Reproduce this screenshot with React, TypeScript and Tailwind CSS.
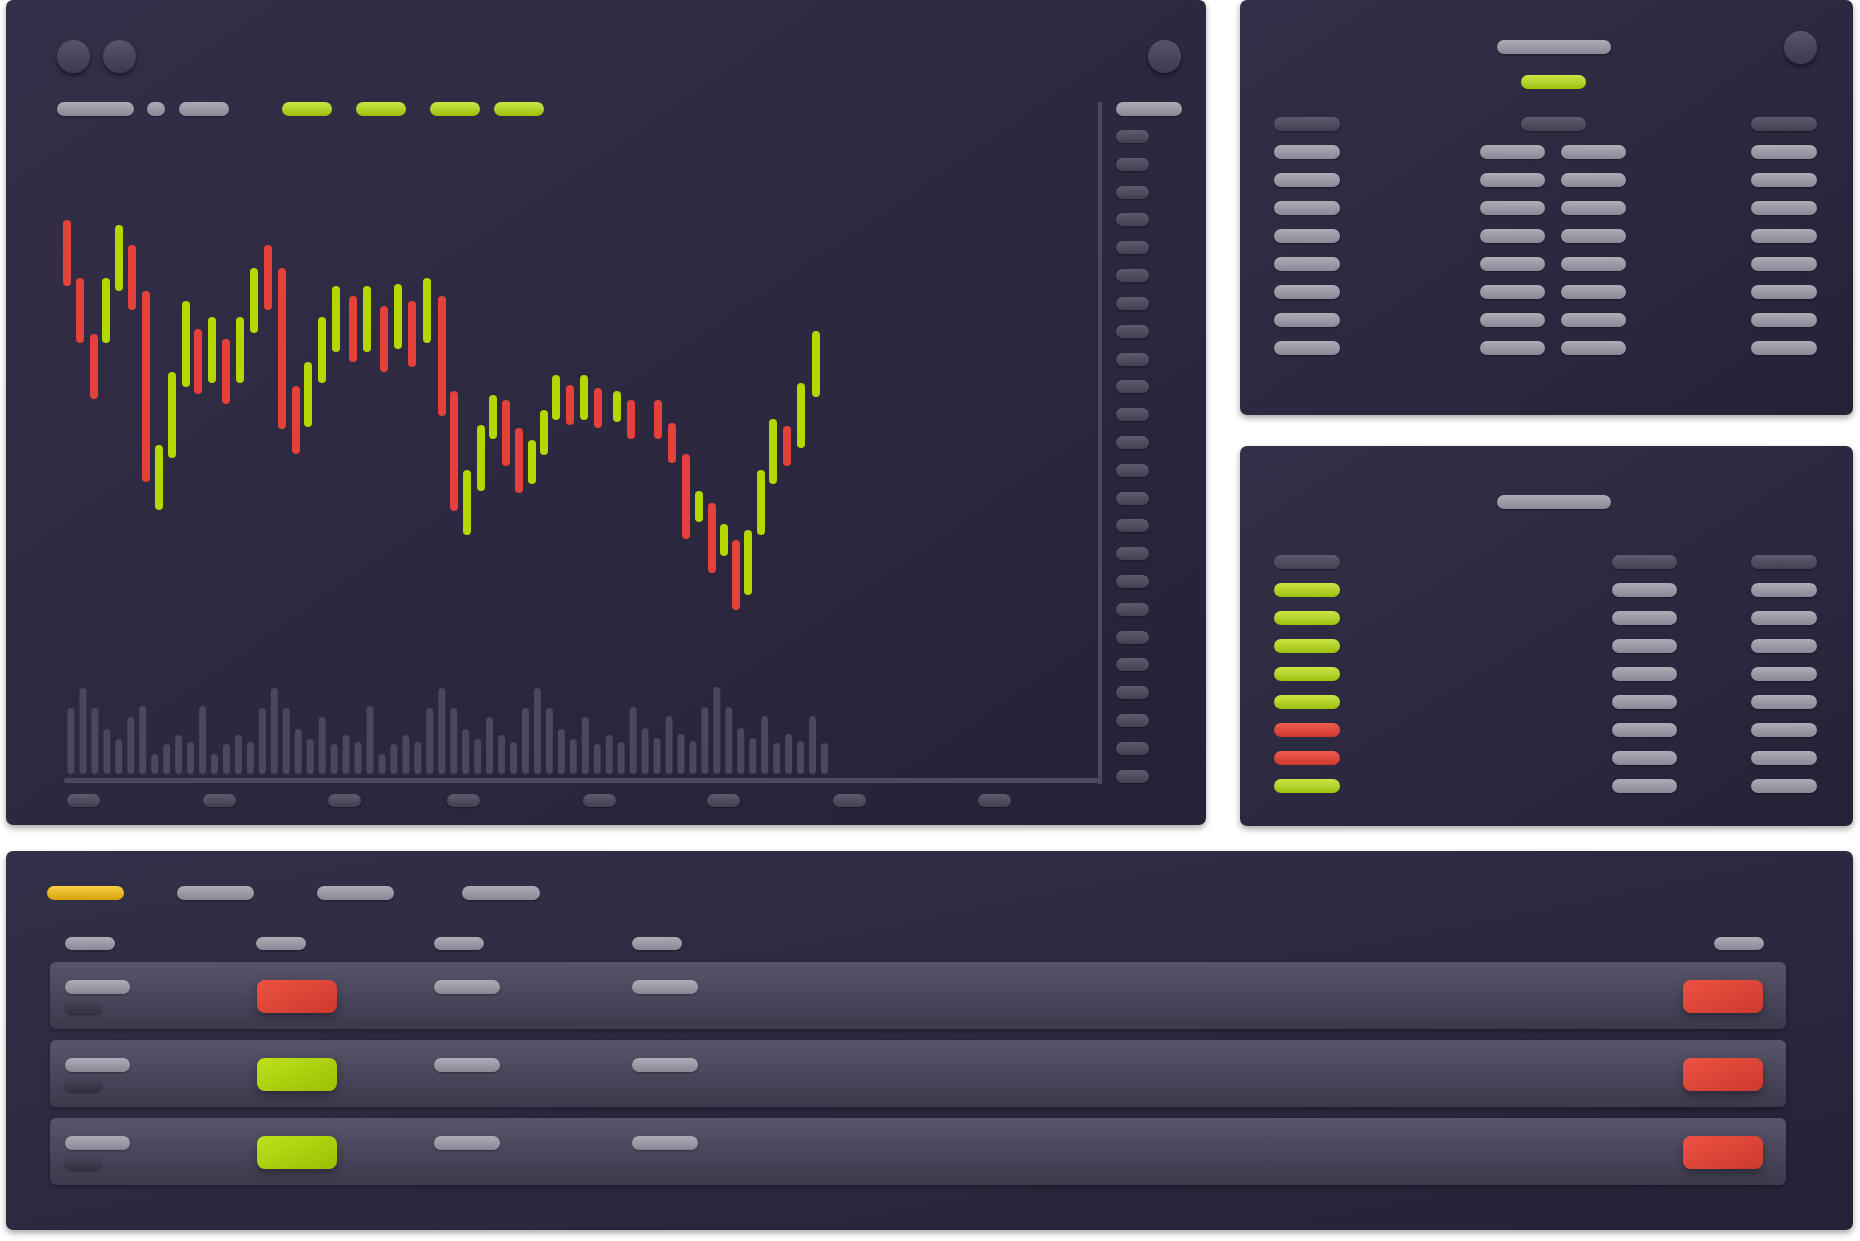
const light = "rounded-full bg-linear-to-b from-[#aeacb6] to-[#8a8895] shadow-[0_1px_2px_rgba(0,0,0,0.35)]";
const dark = "rounded-full bg-linear-to-b from-[#5e5b6e] to-[#434052] shadow-[0_1px_2px_rgba(0,0,0,0.35)]";
const green = "rounded-full bg-linear-to-b from-[#cbe544] to-[#9dc100]";
const red = "rounded-full bg-linear-to-b from-[#ef5b4b] to-[#cc382d]";
const yellow = "rounded-full bg-linear-to-b from-[#f9d040] to-[#d8a200]";
const panel = "rounded-[7px] bg-linear-to-br from-[#322f48] to-[#252238] shadow-[0_3px_6px_rgba(0,0,0,0.35)]";
const circle = "w-[33px] h-[33px] rounded-full bg-linear-to-b from-[#57546b] to-[#3d3a4f] shadow-[0_3px_4px_rgba(0,0,0,0.45)]";

// [centerX, top, bottom, up]
const candles: [number, number, number, boolean][] = [
  [67, 220, 286, false], [80, 278, 343, false], [94, 334, 399, false], [106, 278, 343, true],
  [119, 225, 291, true], [132, 245, 310, false], [146, 291, 482, false], [159, 445, 510, true],
  [172, 372, 458, true], [186, 301, 387, true], [198, 329, 394, false], [212, 317, 383, true],
  [226, 339, 404, false], [240, 317, 383, true], [254, 268, 333, true], [268, 245, 310, false],
  [282, 268, 429, false], [296, 386, 454, false], [308, 362, 427, true], [322, 317, 383, true],
  [336, 286, 352, true], [353, 296, 362, false], [367, 286, 352, true], [384, 306, 372, false],
  [398, 284, 349, true], [412, 301, 367, false], [427, 278, 343, true], [442, 296, 416, false],
  [454, 391, 511, false], [467, 470, 535, true], [481, 425, 491, true], [493, 395, 439, true],
  [506, 400, 466, false], [519, 428, 493, false], [532, 440, 484, true], [544, 410, 455, true],
  [556, 375, 420, true], [570, 385, 425, false], [584, 375, 420, true], [598, 388, 428, false],
  [617, 391, 422, true], [631, 400, 439, false], [658, 400, 439, false], [672, 423, 463, false],
  [686, 454, 539, false], [699, 491, 522, true], [712, 503, 573, false], [724, 524, 556, true],
  [736, 540, 610, false], [748, 530, 595, true], [761, 470, 535, true], [773, 419, 484, true],
  [787, 426, 466, false], [801, 383, 448, true], [816, 331, 397, true],
];

const volumes = [
  66, 86, 66, 45, 35, 57, 68, 20, 30, 39, 32, 68, 20, 30, 39, 32,
  66, 86, 66, 45, 35, 57, 30, 39, 32, 68, 20, 30, 39, 32, 66, 86,
  66, 45, 35, 57, 39, 32, 66, 86, 66, 45, 35, 57, 30, 39, 32, 67,
  46, 36, 58, 40, 33, 67, 87, 67, 46, 36, 58, 31, 40, 33, 58, 31,
];

const xLabels = ["ml-[10px]", "ml-[103px]", "ml-[92px]", "ml-[86px]", "ml-[103px]", "ml-[91px]", "ml-[93px]", "ml-[112px]"];

function Chart() {
  return (
    <svg width="1041" height="668" className="block">
      {volumes.map((h, i) => (
        <rect key={i} x={10.5 + i * 11.96} y={658 - h} width="7" height={h} rx="3.5" fill="#4a4760" />
      ))}
      <rect x="7" y="662" width="1040" height="5" rx="2.5" fill="#4b4860" />
      {candles.map(([cx, t, b, up], i) => (
        <rect key={i} x={cx - 57 - 4} y={t - 116} width="8" height={b - t} rx="4" fill={up ? "#b2d800" : "#e5413a"} />
      ))}
    </svg>
  );
}

function ChartPanel() {
  return (
    <div className={`${panel} w-[1200px] h-[825px] pt-[40px] pl-[51px] pr-[24px] flex flex-col`}>
      <div className="flex items-center">
        <div className={circle} />
        <div className={`${circle} ml-[13px]`} />
        <div className={`${circle} ml-auto mr-[1px]`} />
      </div>
      <div className="flex mt-[29px]">
        <div className="flex flex-col">
          <div className="w-[1045px] h-[682px] flex flex-col border-r-4 border-[#4b4860]">
            <div className="flex h-[14px]">
              <div className={`${light} w-[77px] h-[14px]`} />
              <div className={`${light} w-[18px] h-[14px] ml-[13px]`} />
              <div className={`${light} w-[50px] h-[14px] ml-[14px]`} />
              <div className={`${green} w-[50px] h-[14px] ml-[53px]`} />
              <div className={`${green} w-[50px] h-[14px] ml-[24px]`} />
              <div className={`${green} w-[50px] h-[14px] ml-[24px]`} />
              <div className={`${green} w-[50px] h-[14px] ml-[14px]`} />
            </div>
            <Chart />
          </div>
          <div className="flex mt-[10px]">
            {xLabels.map((m, i) => (
              <div key={i} className={`${dark} w-[33px] h-[13px] ${m}`} />
            ))}
          </div>
        </div>
        <div className="ml-[14px] flex flex-col">
          <div className={`${light} w-[66px] h-[14px]`} />
          <div className="mt-[14px] h-[653px] flex flex-col justify-between">
            {Array.from({ length: 24 }).map((_, i) => (
              <div key={i} className={`${dark} w-[33px] h-[13px]`} />
            ))}
          </div>
        </div>
      </div>
    </div>
  );
}

function OrderBook() {
  return (
    <div className={`${panel} h-[415px] pt-[31px] pl-[34px] pr-[36px]`}>
      <div className="flex items-start h-[33px]">
        <div className={`${light} w-[114px] h-[14px] ml-[223px] mt-[9px]`} />
        <div className={`${circle} ml-auto`} />
      </div>
      <div className={`${green} w-[65px] h-[14px] ml-[247px] mt-[11px]`} />
      <div className="flex mt-[28px]">
        <div className={`${dark} w-[66px] h-[14px]`} />
        <div className={`${dark} w-[65px] h-[14px] ml-[181px]`} />
        <div className={`${dark} w-[66px] h-[14px] ml-auto`} />
      </div>
      <div className="flex flex-col gap-[14px] mt-[14px]">
        {Array.from({ length: 8 }).map((_, i) => (
          <div key={i} className="flex">
            <div className={`${light} w-[66px] h-[14px]`} />
            <div className={`${light} w-[65px] h-[14px] ml-[140px]`} />
            <div className={`${light} w-[65px] h-[14px] ml-[16px]`} />
            <div className={`${light} w-[66px] h-[14px] ml-auto`} />
          </div>
        ))}
      </div>
    </div>
  );
}

const tradeSides = [true, true, true, true, true, false, false, true];

function Trades() {
  return (
    <div className={`${panel} h-[380px] pt-[49px] pl-[34px] pr-[36px]`}>
      <div className={`${light} w-[114px] h-[14px] ml-[223px]`} />
      <div className="flex mt-[46px]">
        <div className={`${dark} w-[66px] h-[14px]`} />
        <div className={`${dark} w-[65px] h-[14px] ml-[272px]`} />
        <div className={`${dark} w-[66px] h-[14px] ml-auto`} />
      </div>
      <div className="flex flex-col gap-[14px] mt-[14px]">
        {tradeSides.map((up, i) => (
          <div key={i} className="flex">
            <div className={`${up ? green : red} w-[66px] h-[14px]`} />
            <div className={`${light} w-[65px] h-[14px] ml-[272px]`} />
            <div className={`${light} w-[66px] h-[14px] ml-auto`} />
          </div>
        ))}
      </div>
    </div>
  );
}

const orders = [false, true, true];

function Orders() {
  return (
    <div className={`${panel} h-[379px] pt-[35px] pl-[44px] pr-[67px]`}>
      <div className="flex -ml-[3px]">
        <div className={`${yellow} w-[77px] h-[14px]`} />
        <div className={`${light} w-[77px] h-[14px] ml-[53px]`} />
        <div className={`${light} w-[77px] h-[14px] ml-[63px]`} />
        <div className={`${light} w-[78px] h-[14px] ml-[68px]`} />
      </div>
      <div className="flex mt-[37px] pl-[15px] pr-[22px]">
        <div className="w-[191px]"><div className={`${light} w-[50px] h-[13px]`} /></div>
        <div className="w-[178px]"><div className={`${light} w-[50px] h-[13px]`} /></div>
        <div className="w-[198px]"><div className={`${light} w-[50px] h-[13px]`} /></div>
        <div className="flex-1"><div className={`${light} w-[50px] h-[13px]`} /></div>
        <div className={`${light} w-[50px] h-[13px]`} />
      </div>
      <div className="flex flex-col gap-[11px] mt-[12px]">
        {orders.map((up, i) => (
          <div
            key={i}
            className="h-[67px] rounded-[6px] bg-linear-to-b from-[#58556a] via-[#4a475c] to-[#3c394d] shadow-[0_2px_5px_rgba(0,0,0,0.3)] flex items-start pt-[18px] pl-[15px] pr-[23px]"
          >
            <div className="w-[192px] flex flex-col">
              <div className={`${light} w-[65px] h-[14px]`} />
              <div className="w-[37px] h-[13px] mt-[7px] rounded-full bg-linear-to-b from-[#46435a] to-[#34313f] shadow-[0_1px_2px_rgba(0,0,0,0.4)]" />
            </div>
            <div className="w-[177px]">
              <div
                className={
                  up
                    ? "w-[80px] h-[33px] rounded-[8px] bg-linear-to-br from-[#bde21a] to-[#9cbf00] shadow-[0_4px_8px_rgba(0,0,0,0.35)]"
                    : "w-[80px] h-[33px] rounded-[8px] bg-linear-to-br from-[#ec5242] to-[#cd392d] shadow-[0_4px_8px_rgba(0,0,0,0.35)]"
                }
              />
            </div>
            <div className="w-[198px]"><div className={`${light} w-[66px] h-[14px]`} /></div>
            <div className="flex-1"><div className={`${light} w-[66px] h-[14px]`} /></div>
            <div className="w-[80px] h-[33px] rounded-[8px] bg-linear-to-br from-[#ec5242] to-[#cd392d] shadow-[0_4px_8px_rgba(0,0,0,0.35)]" />
          </div>
        ))}
      </div>
    </div>
  );
}

export default function App() {
  return (
    <div className="w-[1860px] h-[1241px] bg-white pl-[6px] pr-[7px] flex flex-col overflow-hidden">
      <div className="flex gap-[34px] h-[826px]">
        <ChartPanel />
        <div className="w-[613px] flex flex-col gap-[31px]">
          <OrderBook />
          <Trades />
        </div>
      </div>
      <div className="mt-[25px]">
        <Orders />
      </div>
    </div>
  );
}
